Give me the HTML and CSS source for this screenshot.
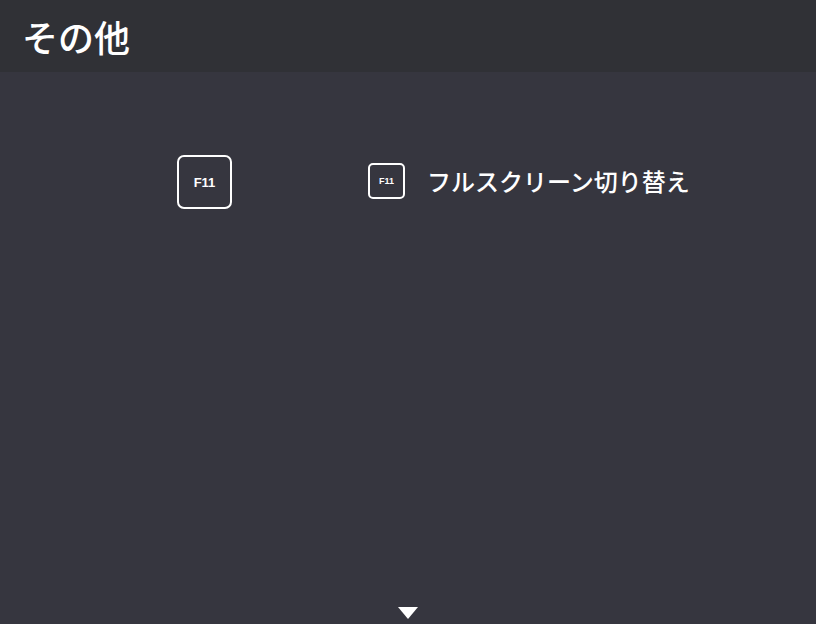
FILE: index.html
```html
<!DOCTYPE html>
<html lang="ja">
<head>
<meta charset="utf-8">
<link rel="stylesheet" href="styles.css">
</head>
<body>
<header class="header"><h1 class="title">その他</h1></header>
<main class="main">
  <div class="row">
    <div class="key-big">F11</div>
    <div class="desc">
      <div class="key-small">F11</div>
      <span class="label">フルスクリーン切り替え</span>
    </div>
  </div>
  <div class="arrow"></div>
</main>
</body>
</html>
```
FILE: styles.css
```css
html, body { margin: 0; padding: 0; }
body {
  width: 816px; height: 624px; overflow: hidden;
  background: #36363f;
  font-family: "Noto Sans CJK JP", "Noto Sans", sans-serif;
  color: #fff;
  display: flex; flex-direction: column;
}
.header {
  height: 72px; background: #303136;
  display: flex; align-items: center; padding-left: 22px;
  box-sizing: border-box;
}
.title { margin: 0; font-size: 36px; font-weight: 500; line-height: 1; letter-spacing: 0; }
.main { flex: 1; position: relative; }
.row { display: flex; align-items: flex-start; padding-top: 83px; padding-left: 177px; }
.key-big {
  width: 55px; height: 54px; box-sizing: border-box;
  border: 2px solid #fff; border-radius: 7px;
  display: flex; align-items: center; justify-content: center;
  font-family: "Liberation Sans", Arial, sans-serif; font-weight: 700; font-size: 13px;
}
.desc { display: flex; align-items: center; margin-left: 136px; margin-top: 8px; gap: 22px; }
.key-small {
  width: 37px; height: 36px; box-sizing: border-box;
  border: 2px solid #fff; border-radius: 5px;
  display: flex; align-items: center; justify-content: center;
  font-family: "Liberation Sans", Arial, sans-serif; font-weight: 700; font-size: 9px;
}
.label { font-size: 24px; font-weight: 500; line-height: 1; }
.arrow {
  position: absolute; left: 398px; bottom: 5px;
  width: 0; height: 0;
  border-left: 10px solid transparent; border-right: 10px solid transparent;
  border-top: 12px solid #fff;
}
```
